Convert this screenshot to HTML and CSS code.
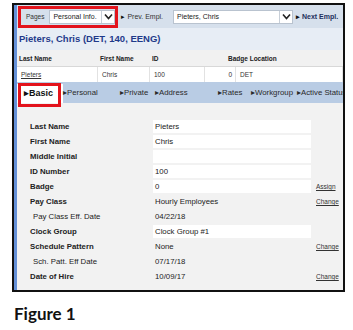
FILE: index.html
```html
<!DOCTYPE html>
<html lang="en">
<head>
    <meta charset="UTF-8">
    <title>Employee - Basic</title>
    <link rel="stylesheet" href="styles.css">
</head>
<body>
    <div class="frame">
        <div class="strip"></div>
        <div class="main">
            <div class="toolbar">
                <span class="pages-label">Pages</span>
                <div class="select select-pages">
                    <span class="select-text">Personal Info.</span>
                    <span class="select-arrow"><svg width="9" height="7" viewBox="0 0 9 7"><polyline points="1,1.5 4.5,5.5 8,1.5" fill="none" stroke="#222" stroke-width="1.6"/></svg></span>
                </div>
                <a class="nav-link prev"><span class="tri">&#9656;</span> Prev. Empl.</a>
                <div class="select select-empl">
                    <span class="select-text">Pieters, Chris</span>
                    <span class="select-arrow"><svg width="9" height="7" viewBox="0 0 9 7"><polyline points="1,1.5 4.5,5.5 8,1.5" fill="none" stroke="#222" stroke-width="1.6"/></svg></span>
                </div>
                <a class="nav-link next"><span class="tri">&#9656;</span> Next Empl.</a>
            </div>

            <h1 class="emp-title">Pieters, Chris (DET, 140, EENG)</h1>

            <div class="emp-table">
                <div class="th">Last Name</div>
                <div class="th">First Name</div>
                <div class="th">ID</div>
                <div class="th th-badge">Badge Location</div>
                <div class="td"><a class="emp-link">Pieters</a></div>
                <div class="td">Chris</div>
                <div class="td">100</div>
                <div class="td td-num">0</div>
                <div class="td">DET</div>
            </div>

            <div class="tabs">
                <div class="tab active">&#9656;Basic</div>
                <div class="tab">&#9656;Personal</div>
                <div class="tab">&#9656;Private</div>
                <div class="tab">&#9656;Address</div>
                <div class="tab">&#9656;Rates</div>
                <div class="tab">&#9656;Workgroup</div>
                <div class="tab">&#9656;Active Status</div>
            </div>

            <div class="form">
                <div class="label">Last Name</div>
                <div class="value box">Pieters</div>
                <div class="action"></div>

                <div class="label">First Name</div>
                <div class="value box">Chris</div>
                <div class="action"></div>

                <div class="label">Middle Initial</div>
                <div class="value box"></div>
                <div class="action"></div>

                <div class="label">ID Number</div>
                <div class="value box">100</div>
                <div class="action"></div>

                <div class="label">Badge</div>
                <div class="value box">0</div>
                <div class="action"><a>Assign</a></div>

                <div class="label">Pay Class</div>
                <div class="value">Hourly Employees</div>
                <div class="action"><a>Change</a></div>

                <div class="label sub">Pay Class Eff. Date</div>
                <div class="value">04/22/18</div>
                <div class="action"></div>

                <div class="label">Clock Group</div>
                <div class="value box">Clock Group #1</div>
                <div class="action"></div>

                <div class="label">Schedule Pattern</div>
                <div class="value">None</div>
                <div class="action"><a>Change</a></div>

                <div class="label sub">Sch. Patt. Eff Date</div>
                <div class="value">07/17/18</div>
                <div class="action"></div>

                <div class="label">Date of Hire</div>
                <div class="value">10/09/17</div>
                <div class="action"><a>Change</a></div>
            </div>
        </div>

        <!-- red callouts drawn over the screen -->
        <div class="callout callout-pages"></div>
        <div class="callout callout-basic"></div>
    </div>

    <p class="caption">Figure 1</p>
</body>
</html>
```

FILE: styles.css
```css
body {
    margin: 0;
    padding: 3px 0 0 12px;
    background-color: #fff;
    font-family: "Liberation Sans", Arial, sans-serif;
    color: #222;
}

.frame {
    position: relative;
    box-sizing: border-box;
    width: 333px;
    height: 289px;
    border: 2px solid #111;
    display: flex;
    overflow: hidden;
    background-color: #f2f2f2;
}

.strip {
    width: 3px;
    background-color: #6490d8;
    flex-shrink: 0;
}

.main {
    flex: 1;
    display: flex;
    flex-direction: column;
    min-width: 0;
}

/* top toolbar */
.toolbar {
    height: 23px;
    background-color: #d6e0ec;
    display: flex;
    align-items: center;
    padding-left: 9px;
    white-space: nowrap;
    font-size: 7px;
}

.pages-label {
    font-size: 6.5px;
    color: #333;
    margin-right: 5px;
}

.select {
    box-sizing: border-box;
    height: 14px;
    background-color: #fff;
    border: 1px solid #b9c3cf;
    display: flex;
    align-items: center;
}

.select-text {
    flex: 1;
    padding-left: 3px;
    font-size: 7px;
    color: #222;
}

.select-arrow {
    width: 12px;
    height: 12px;
    border-left: 1px solid #c8cfd8;
    display: flex;
    align-items: center;
    justify-content: center;
}

.select-pages {
    width: 66px;
}

.select-empl {
    width: 120px;
}

.nav-link {
    font-size: 7px;
    color: #333;
}

.nav-link .tri {
    font-size: 7px;
    color: #111;
}

.nav-link.prev {
    margin: 0 10px 0 6px;
}

.nav-link.next {
    margin-left: 3px;
    color: #1d2f5c;
    font-weight: bold;
}

/* employee header */
.emp-title {
    margin: 0;
    height: 22px;
    line-height: 22px;
    padding-left: 2px;
    background-color: #e7edf5;
    font-size: 9.5px;
    color: #1f3a8a;
    white-space: nowrap;
}

.emp-table {
    display: grid;
    grid-template-columns: 81px 52px 55px 31px 1fr;
    background-color: #fff;
    font-size: 6.5px;
}

.th {
    height: 16px;
    line-height: 17px;
    padding-left: 2px;
    font-weight: bold;
    background-color: #f1f1f1;
    border-bottom: 1px solid #d8d8d8;
}

.th-badge {
    grid-column: span 2;
    padding-left: 23px;
}

.td {
    height: 15px;
    line-height: 15px;
    padding-left: 4px;
    border-right: 1px solid #e2e2e2;
    color: #333;
}

.td-num {
    text-align: right;
    padding: 0 3px 0 0;
}

.emp-link {
    color: #333;
    text-decoration: underline;
}

/* tab bar */
.tabs {
    height: 21px;
    display: grid;
    grid-template-columns: 46px 57px 35px 63px 33px 46px 1fr;
    background-color: #b9cce4;
    font-size: 7.8px;
    white-space: nowrap;
}

.tab {
    line-height: 21px;
    color: #2a2a2a;
}

.tab.active {
    background-color: #fff;
    font-size: 9px;
    font-weight: bold;
    padding-left: 7px;
    margin-top: 2px;
    line-height: 19px;
    color: #111;
}

/* basic info form */
.form {
    flex: 1;
    display: grid;
    grid-template-columns: 118px 158px 1fr;
    grid-auto-rows: 15px;
    column-gap: 5px;
    padding: 16px 0 0 13px;
    font-size: 7.8px;
    background-color: #f2f2f2;
}

.label {
    font-weight: bold;
    line-height: 15px;
    white-space: nowrap;
}

.label.sub {
    font-weight: normal;
    padding-left: 3px;
}

.value {
    line-height: 15px;
    padding-left: 2px;
    white-space: nowrap;
}

.value.box {
    background-color: #fff;
    height: 13px;
    line-height: 13px;
    margin-top: 1px;
}

.action {
    line-height: 15px;
    font-size: 6.5px;
}

.action a {
    color: #333;
    text-decoration: underline;
}

/* red annotation boxes */
.callout {
    position: absolute;
    box-sizing: border-box;
    border: 3.5px solid #e3131c;
}

.callout-pages {
    left: 4px;
    top: 1px;
    width: 100px;
    height: 22px;
}

.callout-basic {
    left: 4px;
    top: 78px;
    width: 43px;
    height: 24px;
}

.caption {
    margin: 11px 0 0 2px;
    font-family: Lato, "Open Sans", sans-serif;
    font-weight: bold;
    font-size: 17px;
    color: #111;
}
```
